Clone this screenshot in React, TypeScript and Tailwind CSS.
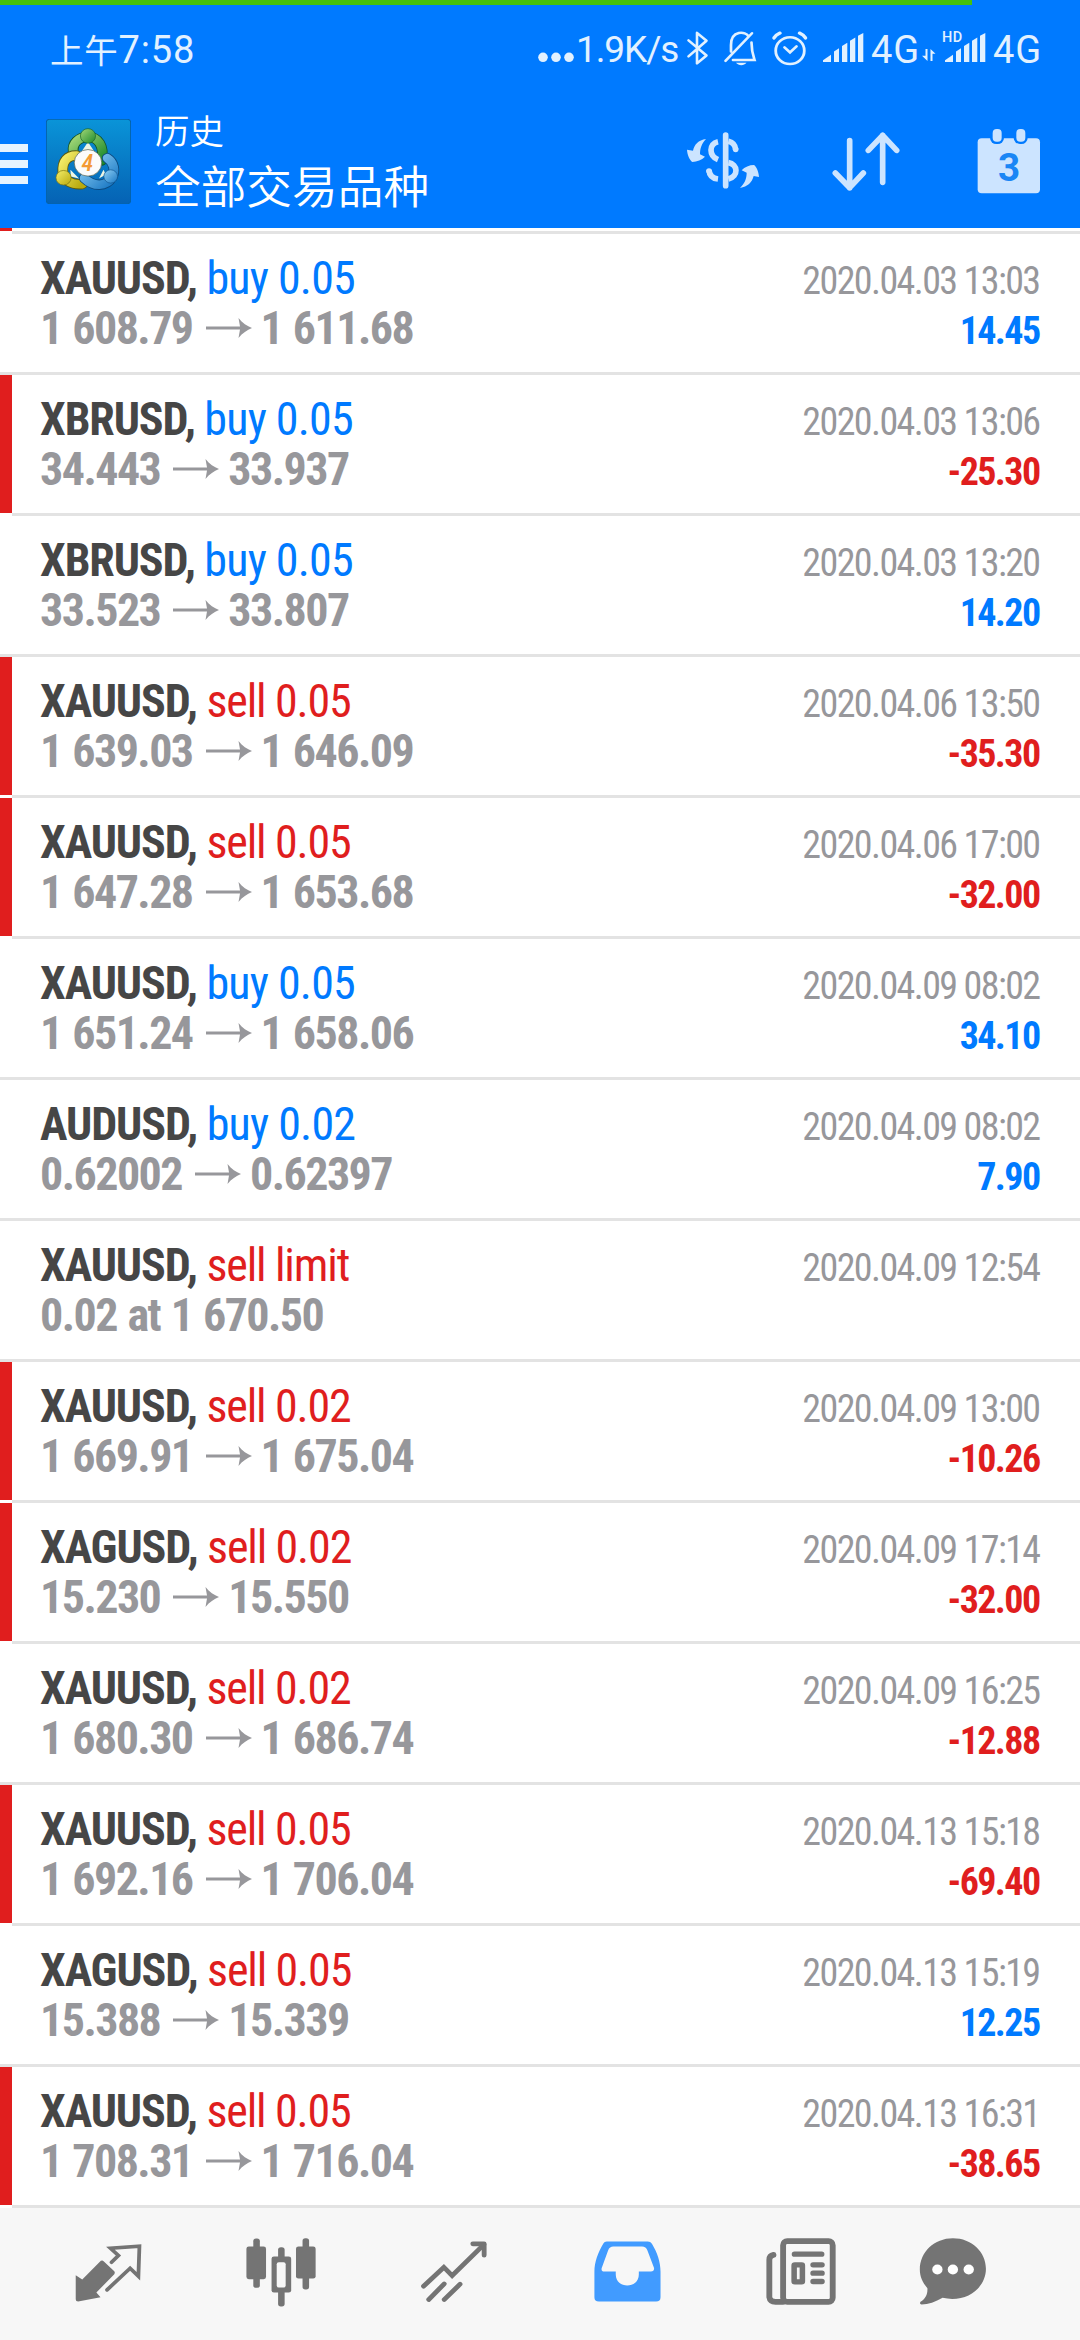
type Deal = {
  symbol: string;
  type: "buy" | "sell";
  volume: string;
  from?: string;
  to?: string;
  note?: string;
  time: string;
  profit?: string;
  marked?: boolean;
};

const DEALS: Deal[] = [
  { symbol: "XAUUSD", type: "buy", volume: "0.05", from: "1 608.79", to: "1 611.68", time: "2020.04.03 13:03", profit: "14.45" },
  { symbol: "XBRUSD", type: "buy", volume: "0.05", from: "34.443", to: "33.937", time: "2020.04.03 13:06", profit: "-25.30", marked: true },
  { symbol: "XBRUSD", type: "buy", volume: "0.05", from: "33.523", to: "33.807", time: "2020.04.03 13:20", profit: "14.20" },
  { symbol: "XAUUSD", type: "sell", volume: "0.05", from: "1 639.03", to: "1 646.09", time: "2020.04.06 13:50", profit: "-35.30", marked: true },
  { symbol: "XAUUSD", type: "sell", volume: "0.05", from: "1 647.28", to: "1 653.68", time: "2020.04.06 17:00", profit: "-32.00", marked: true },
  { symbol: "XAUUSD", type: "buy", volume: "0.05", from: "1 651.24", to: "1 658.06", time: "2020.04.09 08:02", profit: "34.10" },
  { symbol: "AUDUSD", type: "buy", volume: "0.02", from: "0.62002", to: "0.62397", time: "2020.04.09 08:02", profit: "7.90" },
  { symbol: "XAUUSD", type: "sell", volume: "limit", note: "0.02 at 1 670.50", time: "2020.04.09 12:54" },
  { symbol: "XAUUSD", type: "sell", volume: "0.02", from: "1 669.91", to: "1 675.04", time: "2020.04.09 13:00", profit: "-10.26", marked: true },
  { symbol: "XAGUSD", type: "sell", volume: "0.02", from: "15.230", to: "15.550", time: "2020.04.09 17:14", profit: "-32.00", marked: true },
  { symbol: "XAUUSD", type: "sell", volume: "0.02", from: "1 680.30", to: "1 686.74", time: "2020.04.09 16:25", profit: "-12.88" },
  { symbol: "XAUUSD", type: "sell", volume: "0.05", from: "1 692.16", to: "1 706.04", time: "2020.04.13 15:18", profit: "-69.40", marked: true },
  { symbol: "XAGUSD", type: "sell", volume: "0.05", from: "15.388", to: "15.339", time: "2020.04.13 15:19", profit: "12.25" },
  { symbol: "XAUUSD", type: "sell", volume: "0.05", from: "1 708.31", to: "1 716.04", time: "2020.04.13 16:31", profit: "-38.65", marked: true },
];

function Signal() {
  return (
    <svg className="h-[29.5px] w-[41px] shrink-0" viewBox="0 0 41 32" preserveAspectRatio="none" fill="#e2f1ff">
      <path d="M0 31.5V29.5L8 23.5V31.5Z" />
      <path d="M11 31.5V20L16 16.5V31.5Z" />
      <path d="M19 31.5V14L24.3 10.5V31.5Z" />
      <path d="M27 31.5V8.5L32.3 5V31.5Z" />
      <path d="M35 31.5V3L40.3 0V31.5Z" />
    </svg>
  );
}

function StatusBar() {
  return (
    <div className="flex h-[95px] items-start font-['Roboto','Noto_Sans_CJK_SC',sans-serif] text-[37px] leading-[56px] font-stretch-normal text-[#e2f1ff]">
      <span className="mt-[17px] ml-[50px] w-[490px] shrink-0 text-[38px] tracking-[0.8px]">
        <span className="text-[33.5px]">上午</span>7:58
      </span>
      <svg className="mt-[46px] ml-[-4px] h-[12px] w-[40px] shrink-0" viewBox="0 0 40 12" fill="#e2f1ff">
        <circle cx="7" cy="6.3" r="4.8" />
        <circle cx="20" cy="6.3" r="4.8" />
        <circle cx="33" cy="6.3" r="4.8" />
      </svg>
      <span className="mt-[17px] w-[109px] shrink-0 tracking-[-1.1px]">1.9K/s</span>
      <svg className="mt-[25px] h-[35.5px] w-[24px] shrink-0" viewBox="685 32 24 38" preserveAspectRatio="none" fill="none" stroke="#e2f1ff" strokeWidth="2.6" strokeLinejoin="round" strokeLinecap="round">
        <path d="M688.5 43L706.5 59.3L697 67.8V35L706.5 43.5L688.5 60.3" />
      </svg>
      <svg className="mt-[25px] ml-[13px] h-[35.5px] w-[36px] shrink-0" viewBox="722 32 36 38" preserveAspectRatio="none" fill="none" stroke="#e2f1ff" strokeWidth="2.7" strokeLinecap="round">
        <path d="M725.5 65L752 35.5M731 55V48C731 32 746 33 748.5 39M751.5 45.5C751.5 54 752.5 58 754.5 64H733" />
        <path d="M736 67H746.5C744 70.5 738.5 70.5 736 67Z" fill="#e2f1ff" stroke="none" />
      </svg>
      <svg className="mt-[25px] ml-[12px] h-[37.5px] w-[40px] shrink-0" viewBox="770 32 40 40" preserveAspectRatio="none" fill="none" stroke="#e2f1ff" strokeWidth="2.8" strokeLinecap="round">
        <circle cx="790" cy="54" r="14.3" />
        <path d="M784.5 50.5L790 56L796.5 49.5" />
        <path strokeWidth="3.5" d="M774 40.5C775.5 38 777.5 36.5 780 35.3M799.5 35.3C802 36.5 804 38 805.5 40.5" />
      </svg>
      <span className="mt-[28px] ml-[13px] flex">
        <Signal />
      </span>
      <span className="mt-[17px] ml-[7px] w-[51px] shrink-0 text-[38px] tracking-[1px]">4G</span>
      <svg className="mt-[44px] h-[12.5px] w-[14px] shrink-0" viewBox="0 0 14 13" preserveAspectRatio="none" fill="#e2f1ff">
        <path d="M5.5 0V12.5L0 7H3.5V0ZM8.5 12.5V0L13.5 5H10.5V12.5Z" />
      </svg>
      <span className="relative mt-[28px] ml-[9px] flex">
        <Signal />
        <span className="absolute -top-[2.5px] -left-[3px] bg-[#007aff] pr-px text-[14.5px] leading-[14px] font-medium tracking-[0.5px]">HD</span>
      </span>
      <span className="mt-[17px] ml-[7px] text-[38px] tracking-[1px]">4G</span>
    </div>
  );
}

function AppLogo() {
  return (
    <svg className="h-[85px] w-[85px]" viewBox="132 357 247 256" preserveAspectRatio="none">
      <defs>
        <linearGradient id="tile" x1="0" y1="0" x2="0" y2="1">
          <stop offset="0" stopColor="#0a94d8" />
          <stop offset="1" stopColor="#0562b4" />
        </linearGradient>
        <linearGradient id="green" x1="0" y1="0" x2="1" y2="1">
          <stop offset="0" stopColor="#a4d878" />
          <stop offset="1" stopColor="#1d8a2c" />
        </linearGradient>
        <linearGradient id="yellow" x1="0" y1="0" x2="1" y2="1">
          <stop offset="0" stopColor="#f5ee6a" />
          <stop offset="1" stopColor="#b9a90c" />
        </linearGradient>
        <linearGradient id="sky" x1="0" y1="0" x2="1" y2="1">
          <stop offset="0" stopColor="#8fd0f5" />
          <stop offset="1" stopColor="#1a78c4" />
        </linearGradient>
      </defs>
      <rect x="133" y="358" width="245" height="254" rx="10" fill="url(#tile)" stroke="#0562a8" strokeWidth="3" />
      <g strokeLinecap="round" fill="none">
        <path d="M211 455C208 430 226 412 254 410C284 412 302 438 294 482" stroke="#14552a" strokeWidth="31" />
        <path d="M211 455C208 430 226 412 254 410C284 412 302 438 294 482" stroke="url(#green)" strokeWidth="26" />
        <path d="M222 467C194 466 178 484 181 518C186 544 206 556 238 553" stroke="#5b5a10" strokeWidth="31" />
        <path d="M222 467C194 466 178 484 181 518C186 544 206 556 238 553" stroke="url(#yellow)" strokeWidth="26" />
        <path d="M310 475C330 488 334 512 324 533C307 562 270 562 243 535" stroke="#0b4a80" strokeWidth="31" />
        <path d="M310 475C330 488 334 512 324 533C307 562 270 562 243 535" stroke="url(#sky)" strokeWidth="26" />
      </g>
      <path d="M254 426L236 454H272ZM203 510L228 536L204 530ZM286 536L299 510L306 524Z" fill="#eef6e4" />
      <circle cx="254" cy="408" r="22" fill="url(#green)" stroke="#17652a" strokeWidth="2" />
      <circle cx="183" cy="534" r="22" fill="url(#yellow)" stroke="#77700f" strokeWidth="2" />
      <circle cx="320" cy="530" r="20" fill="url(#sky)" stroke="#0f5590" strokeWidth="2" />
      <circle cx="254" cy="489" r="40" fill="#fbfbfb" stroke="#4b5a4a" strokeWidth="2" />
      <text x="252" y="514" textAnchor="middle" fontFamily="Roboto, sans-serif" fontSize="70" fontWeight="500" fontStyle="italic" fill="#f39a35">4</text>
    </svg>
  );
}

function Toolbar() {
  return (
    <div className="flex h-[128px] items-start">
      <div className="mt-[44px] flex w-[28px] flex-col gap-[8.7px]">
        <span className="h-[7.5px] bg-[#e6f3ff]" />
        <span className="h-[7.5px] bg-[#e6f3ff]" />
        <span className="h-[7.5px] bg-[#e6f3ff]" />
      </div>
      <div className="mt-[19px] ml-[18px]">
        <AppLogo />
      </div>
      <div className="mt-[5px] ml-[24px] w-[531px] font-['Noto_Sans_CJK_SC',sans-serif] font-[350] text-white">
        <div className="text-[34.5px] leading-[48px]">历史</div>
        <div className="text-[45.7px] leading-[62px]">全部交易品种</div>
      </div>
      <svg className="mt-[28px] h-[67px] w-[75px]" viewBox="135 84 225 201" fill="#cce4ff">
        <path d="M195 117C172 120 160 134 156 152L138 149C139 165 146 180 154 186C168 185 182 180 192 170L177 163C177 145 182 131 195 117Z" />
        <path d="M297 264C320 260 333 248 338 228L354 231C353 215 347 201 339 195C325 195 311 201 302 211L317 218C317 236 311 250 297 264Z" />
        <g fill="none" stroke="#cce4ff" strokeWidth="17">
          <path d="M231 125C203 131 203 168 231 179M204 210C205 226 214 235 231 237" />
          <path d="M262 124C274 127 283 136 284 149M262 188C291 193 294 228 262 237" />
          <path d="M254 105V257M204 213V213.1M284 148V148.1" strokeLinecap="round" />
        </g>
      </svg>
      <svg className="mt-[28px] ml-[70px] h-[67px] w-[70px]" viewBox="570 84 210 201" fill="none" stroke="#cce4ff" strokeWidth="17" strokeLinecap="round" strokeLinejoin="round">
        <path d="M626 122V263M583 219L626 263L667 219M725 247V106M682 151L725 106L767 151" />
      </svg>
      <svg className="mt-[28px] ml-[75px] h-[67px] w-[66px]" viewBox="1005 84 198 201">
        <rect x="1010" y="115" width="187" height="165" rx="12" fill="#cce4ff" />
        <rect x="1047" y="78" width="42" height="54" rx="19" fill="#007aff" />
        <rect x="1118" y="78" width="42" height="54" rx="19" fill="#007aff" />
        <rect x="1055" y="87" width="27" height="38" rx="12" fill="#cce4ff" />
        <rect x="1126" y="87" width="27" height="38" rx="12" fill="#cce4ff" />
        <text className="font-stretch-normal" x="1104" y="244" textAnchor="middle" fontFamily="Roboto, sans-serif" fontSize="116" fontWeight="700" fill="#1a86f5">3</text>
      </svg>
    </div>
  );
}

function DealRow({ deal }: { deal: Deal }) {
  const typeColor = deal.type === "buy" ? "text-[#007aff] tracking-[-0.8px]" : "text-[#e01e1e] tracking-[-1.15px]";
  const negative = deal.profit?.startsWith("-");

  return (
    <div>
      <div className="flex h-[138px]">
        <div className={`w-[12px] shrink-0 ${deal.marked ? "bg-[#e01e1e]" : "bg-white"}`} />
        <div className="flex flex-1 justify-between pr-[40.5px] pl-[28px]">
          <div className="pt-[19px] text-[46px] leading-[50px] whitespace-nowrap">
            <div className="tracking-[-1.1px]">
              <span className="font-bold text-[#464646]">{deal.symbol},</span>{" "}
              <span className={typeColor}>
                {deal.type} {deal.volume}
              </span>
            </div>
            <div className="flex font-bold tracking-[-1.55px] text-[#97979b] [word-spacing:1.5px]">
              {deal.note ?? (
                <>
                  {deal.from}
                  <svg className="mt-[15px] mr-[9px] ml-[13px] h-[20px] w-[46px]" viewBox="0 0 46 20" fill="#97979b">
                    <path d="M0 8.5H34L32.5 0C36.5 5 41 8 46 10C41 12 36.5 15 32.5 20L34 11.5H0Z" />
                  </svg>
                  {deal.to}
                </>
              )}
            </div>
          </div>
          <div className="pt-[22px] text-right text-[38px] leading-[50px] tracking-[-1.6px] whitespace-nowrap">
            <div className="text-[#97979b]">{deal.time}</div>
            {deal.profit && (
              <div className={`font-bold ${negative ? "text-[#e01e1e]" : "text-[#007aff]"}`}>{deal.profit}</div>
            )}
          </div>
        </div>
      </div>
      <div className={`h-[3px] bg-[#e3e3e3] ${deal.marked ? "ml-[12px]" : ""}`} />
    </div>
  );
}

function BottomNav() {
  return (
    <nav className="flex h-[132px] items-start bg-[#f7f7f7] pt-[28.5px] pl-[74px]">
      <svg className="h-[71px] w-[70px]" viewBox="215 139.4 203.3 213" preserveAspectRatio="none" fill="none" stroke="#747474">
        <path d="M220 254L239 267L293 211Q298 209 301 212L332 242Q335 246 332 251L280 306L292 320L227 333Q220 333 220 326Z" fill="#747474" stroke="none" />
        <path d="M311 298L378 233L402 257L405 167L321 173L344 195L324 215" strokeWidth="11" strokeLinecap="round" />
      </svg>
      <svg className="ml-[100px] h-[71px] w-[75px]" viewBox="708 139.4 217.8 213" preserveAspectRatio="none" fill="#747474">
        <rect x="735" y="144" width="19" height="148" rx="8" />
        <rect x="715" y="168" width="57" height="98" rx="7" />
        <rect x="878" y="143" width="19" height="154" rx="8" />
        <rect x="859" y="168" width="57" height="96" rx="7" />
        <rect x="807" y="170" width="19" height="178" rx="8" />
        <rect x="788" y="198" width="57" height="108" rx="7" />
        <rect x="803" y="215" width="26" height="76" rx="6" fill="#f7f7f7" />
      </svg>
      <svg className="ml-[101px] h-[71px] w-[70px]" viewBox="1219.7 139.4 203.3 213" preserveAspectRatio="none" fill="none" stroke="#747474" strokeWidth="14" strokeLinecap="round" strokeLinejoin="miter">
        <path d="M1230 287L1289 230L1313 255L1405 162" />
        <path d="M1373 160H1406V194" strokeLinejoin="round" />
        <path d="M1245 327L1290 280M1290 327L1336 281" />
      </svg>
      <svg className="ml-[102px] h-[71px] w-[70px]" viewBox="151 139.4 203.3 213" preserveAspectRatio="none">
        <path d="M194 153H313Q321 153 325 160C341 187 350 215 350 243V320Q350 333 337 333H171Q158 333 158 320V243C158 215 168 187 184 159Q187 153 194 153Z" fill="#419bff" />
        <path d="M213 168H296Q308 168 312 180L331 232Q333 242 322 243H287V252C287 296 220 296 220 252V243H187Q177 242 179 233L198 179Q202 168 213 168Z" fill="#f7f7f7" />
      </svg>
      <svg className="ml-[102px] h-[71px] w-[75px]" viewBox="650.5 139.4 217.8 213" preserveAspectRatio="none" fill="none" stroke="#747474">
        <rect x="706" y="152" width="144" height="182" rx="12" strokeWidth="17" />
        <path d="M678 193Q666 195 666 208V320Q668 334 684 334H706" strokeWidth="17" strokeLinecap="round" />
        <path d="M739 191H818M793 223H819M793 248H819M793 273H819" strokeWidth="16" strokeLinecap="round" />
        <rect x="738" y="223" width="24" height="51" rx="2" strokeWidth="16" />
      </svg>
      <svg className="ml-[79px] h-[71px] w-[70px]" viewBox="1097.7 139.4 203.3 213" preserveAspectRatio="none" fill="#747474">
        <path d="M1199 143C1254 143 1295 184 1295 235C1295 292 1240 338 1169 322C1148 335 1128 342 1108 342Q1101 341 1105 334C1120 324 1126 310 1125 293C1111 276 1103 258 1103 237C1103 184 1145 143 1199 143Z" />
        <circle cx="1154" cy="237" r="15" fill="#fff" />
        <circle cx="1199" cy="237" r="15" fill="#fff" />
        <circle cx="1245" cy="237" r="15" fill="#fff" />
      </svg>
    </nav>
  );
}

export default function App() {
  return (
    <div className="h-[2340px] w-[1080px] overflow-hidden bg-white font-['Roboto_Condensed','Roboto',sans-serif] font-stretch-condensed">
      <header className="bg-[#007aff]">
        <div className="h-[5px] w-[972px] bg-[#45c10a]" />
        <StatusBar />
        <Toolbar />
      </header>
      <main>
        {/* Bottom edge of the row scrolled under the header */}
        <div className="h-[3px] w-[12px] bg-[#e01e1e]" />
        <div className="ml-[12px] h-[3px] bg-[#e3e3e3]" />
        {DEALS.map((deal) => (
          <DealRow key={deal.time + deal.symbol} deal={deal} />
        ))}
      </main>
      <BottomNav />
    </div>
  );
}
